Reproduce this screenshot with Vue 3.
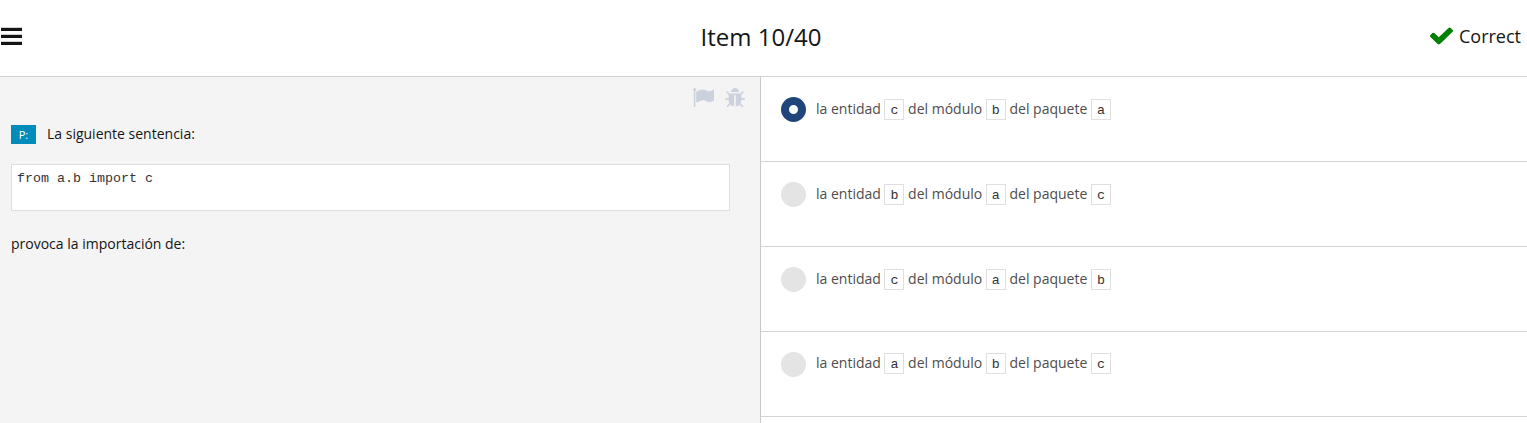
<script setup>
const answers = [
  { parts: ['c', 'b', 'a'], selected: true },
  { parts: ['b', 'a', 'c'], selected: false },
  { parts: ['c', 'a', 'b'], selected: false },
  { parts: ['a', 'b', 'c'], selected: false },
  { parts: null, selected: false },
]
const labels = ['la entidad', 'del módulo', 'del paquete']
</script>

<template>
  <div class="page">
    <header class="topbar">
      <button class="menu" aria-label="Menu"><i></i><i></i><i></i></button>
      <h1 class="title">Item 10/40</h1>
      <div class="status">
        <svg class="check" viewBox="121 298 1550 1224" preserveAspectRatio="none"><path d="M1671 566q0 40-28 68l-724 724-136 136q-28 28-68 28t-68-28l-136-136-362-362q-28-28-28-68t28-68l136-136q28-28 68-28t68 28l294 295 656-657q28-28 68-28t68 28l136 136q28 28 28 68z" /></svg>
        <span>Correct</span>
      </div>
    </header>
    <main class="content">
      <section class="question">
        <div class="tools">
          <svg class="flag" viewBox="64 128 1728 1536" preserveAspectRatio="none"><path d="M320 256q0 72-64 110v1266q0 13-9.500 22.500t-22.500 9.500h-64q-13 0-22.500-9.500t-9.500-22.500v-1266q-64-38-64-110 0-53 37.500-90.500t90.500-37.500 90.500 37.500 37.500 90.500zm1472 64v763q0 25-12.500 38.500t-39.500 27.500q-215 116-369 116-61 0-123.500-22t-108.500-48-115.500-48-142.500-22q-192 0-464 146-17 9-33 9-26 0-45-19t-19-45v-742q0-32 31-55 21-14 79-43 236-120 421-120 107 0 200 29t219 88q38 19 88 19 54 0 117.500-21t110-47 88-47 54.500-21q26 0 45 19t19 45z" /></svg>
          <svg class="bug" viewBox="96 64 1600 1536" preserveAspectRatio="none"><path d="M1696 960q0 26-19 45t-45 19h-224q0 171-67 290l208 209q19 19 19 45t-19 45q-18 19-45 19t-45-19l-198-197q-5 5-15 13t-42 28.500-65 36.500-82 29-97 13v-896h-128v896q-51 0-101.500-13.500t-87-33-66-39-43.500-32.500l-15-14-183 207q-20 21-48 21-24 0-43-16-19-18-20.500-44.500t15.500-46.500l202-227q-58-114-58-274h-224q-26 0-45-19t-19-45 19-45 45-19h224v-294l-173-173q-19-19-19-45t19-45 45-19 45 19l173 173h844l173-173q19-19 45-19t45 19 19 45-19 45l-173 173v294h224q26 0 45 19t19 45zm-480-576h-640q0-133 93.500-226.500t226.500-93.500 226.500 93.500 93.500 226.500z" /></svg>
        </div>
        <p class="prompt"><span class="tag">P:</span><span class="lead">La siguiente sentencia:</span></p>
        <pre class="snippet">from a.b import c</pre>
        <p class="followup">provoca la importación de:</p>
      </section>
      <section class="answers">
        <div v-for="(answer, n) in answers" :key="n" class="answer" :class="{ last: n === 3 }">
          <template v-if="answer.parts">
            <span class="radio" :class="{ selected: answer.selected }"></span>
            <span class="text"><template v-for="(part, i) in answer.parts" :key="i">{{ labels[i] }} <code>{{ part }}</code>{{ ' ' }}</template></span>
          </template>
        </div>
      </section>
    </main>
  </div>
</template>

<style>
body {
  margin: 0;
  overflow: hidden;
}
</style>

<style scoped>
.page {
  height: 423px;
  display: flex;
  flex-direction: column;
  overflow: hidden;
  background: #fff;
  color: #151515;
  font-family: "Open Sans", sans-serif;
  font-size: 14px;
}
.topbar {
  flex: none;
  display: grid;
  grid-template-columns: 1fr auto 1fr;
  align-items: center;
  height: 76px;
  padding: 0 6px 0 1px;
  box-sizing: content-box;
  width: 1520px;
  border-bottom: 1px solid #d2d3d3;
}
.menu {
  display: flex;
  flex-direction: column;
  gap: 3px;
  width: 21px;
  margin: 0 0 4px;
  padding: 0;
  border: 0;
  background: none;
}
.menu i {
  height: 3px;
  border-top: 1px solid #d0d0d0;
  background: #151515;
}
.title {
  margin: 0 0 3px;
  font-size: 24px;
  line-height: 32px;
  font-weight: 400;
}
.status {
  display: flex;
  justify-content: flex-end;
  align-items: center;
  font-size: 18px;
  line-height: 24px;
  margin-bottom: 4px;
}
.check {
  width: 23px;
  height: 17.500px;
  margin-right: 6px;
  fill: #008000;
}
.content {
  flex: 1;
  display: flex;
  min-height: 0;
}
.question {
  box-sizing: border-box;
  width: 761px;
  padding: 11px 30px 0 11px;
  border-right: 1px solid #c8c9c9;
  background: #f4f4f4;
}
.tools {
  display: flex;
  justify-content: flex-end;
  gap: 11px;
  height: 21px;
  margin-right: -15px;
  fill: #cbd2dd;
}
.flag {
  width: 21.500px;
  height: 19px;
}
.bug {
  width: 20px;
  height: 19px;
}
.prompt {
  display: flex;
  align-items: center;
  height: 19px;
  margin: 16px 0 20px;
}
.lead {
  padding-bottom: 2px;
}
.tag {
  width: 25px;
  height: 19px;
  margin-right: 11px;
  background: #008cba;
  color: #fff;
  font-size: 11px;
  line-height: 20px;
  text-align: center;
}
.snippet {
  box-sizing: border-box;
  width: 719px;
  height: 47px;
  margin: 0;
  padding: 6px 5px 0;
  border: 1px solid #dfdfdf;
  background: #fff;
  color: #333;
  font: 13.333px/16px "Liberation Mono", monospace;
}
.followup {
  margin: 23px 0 0;
  line-height: 20px;
}
.answers {
  flex: 1;
}
.answer {
  box-sizing: border-box;
  display: flex;
  height: 85px;
  padding: 20px 20px 0;
  border-bottom: 1px solid #d2d3d3;
  color: #4d4d4d;
}
.radio {
  box-sizing: border-box;
  flex: none;
  width: 25px;
  height: 25px;
  margin-right: 10px;
  border-radius: 50%;
  background: #e4e4e4;
}
.radio.selected {
  border: 8.500px solid #20457a;
  background: #fff;
}
.text {
  line-height: 24px;
}
.last .text {
  margin-top: -1px;
}
code {
  display: inline-block;
  box-sizing: border-box;
  height: 21px;
  padding: 2px 5px 0;
  border: 1px solid #dfdfdf;
  background: #fff;
  color: #333;
  font: 13.333px/17px "Liberation Mono", monospace;
}
</style>
